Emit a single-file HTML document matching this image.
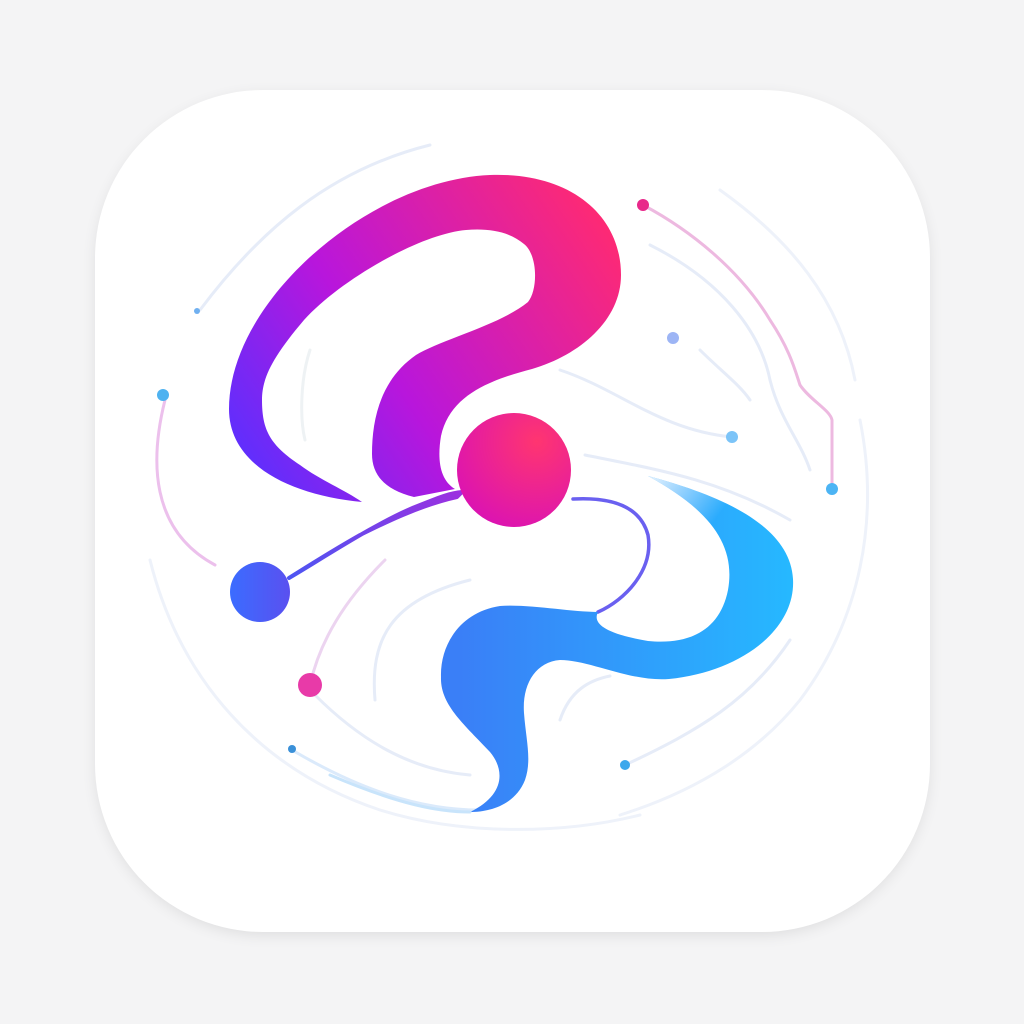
<!DOCTYPE html>
<html><head><meta charset="utf-8"><style>
html,body{margin:0;padding:0;background:#f4f4f5;}
svg{display:block}
</style></head><body>
<svg width="1024" height="1024" viewBox="0 0 1024 1024" xmlns="http://www.w3.org/2000/svg">
<defs>
<filter id="sh" x="-20%" y="-20%" width="140%" height="140%"><feGaussianBlur stdDeviation="8"/></filter>
<linearGradient id="q" x1="240" y1="470" x2="610" y2="220" gradientUnits="userSpaceOnUse">
<stop offset="0" stop-color="#5a30ff"/><stop offset="0.4" stop-color="#b816dc"/><stop offset="1" stop-color="#ff2a72"/></linearGradient>
<linearGradient id="b" x1="460" y1="640" x2="790" y2="640" gradientUnits="userSpaceOnUse">
<stop offset="0" stop-color="#3a7ff7"/><stop offset="1" stop-color="#26b8ff"/></linearGradient>
<linearGradient id="bw" x1="640" y1="470" x2="760" y2="560" gradientUnits="userSpaceOnUse">
<stop offset="0" stop-color="#fff" stop-opacity="1"/><stop offset="0.6" stop-color="#fff" stop-opacity="0"/></linearGradient>
<linearGradient id="bt" x1="520" y1="690" x2="500" y2="812" gradientUnits="userSpaceOnUse">
<stop offset="0" stop-color="#2aa0ff" stop-opacity="0"/><stop offset="1" stop-color="#1ec0ff" stop-opacity="0.6"/></linearGradient>
<radialGradient id="p" cx="0.7" cy="0.25" r="0.9"><stop offset="0" stop-color="#ff3570"/><stop offset="1" stop-color="#d810b8"/></radialGradient>
<linearGradient id="bl" x1="0" y1="0" x2="1" y2="0"><stop offset="0" stop-color="#3b6cff"/><stop offset="1" stop-color="#5a50f0"/></linearGradient>
<linearGradient id="ln" x1="289" y1="574" x2="457" y2="494" gradientUnits="userSpaceOnUse"><stop offset="0" stop-color="#4e55f2"/><stop offset="1" stop-color="#9b30e0"/></linearGradient>
</defs>
<rect x="97" y="96" width="831" height="838" rx="168" fill="#000" opacity="0.10" filter="url(#sh)"/>
<rect x="95" y="90" width="835" height="842" rx="168" fill="#fff"/>
<g fill="none" stroke="#e6ecf8" stroke-width="3" stroke-linecap="round">
<path d="M200,310 C260,230 330,170 430,145"/>
<path d="M165,400 C150,460 150,530 215,565" stroke="#ecc0ec"/>
<path d="M310,350 C300,380 300,420 305,440" stroke="#eef2f4"/>
<path d="M650,245 C720,280 760,330 770,380 C780,420 800,440 810,470" />
<path d="M700,350 C720,370 740,385 750,400"/>
<path d="M560,370 C620,390 660,430 732,437"/>
<path d="M585,455 C660,470 720,480 790,520"/>
<path d="M310,685 C320,640 345,600 385,560" stroke="#ecd4f0"/>
<path d="M315,695 C360,740 410,770 470,775"/>
<path d="M292,750 C360,790 420,810 480,810" stroke="#dbeafb"/>
<path d="M625,765 C700,730 750,700 790,640"/>
<path d="M375,700 C370,640 390,600 470,580"/>
<path d="M560,720 C570,690 590,680 610,676"/>
<path d="M150,560 C180,680 260,770 380,810 C460,835 560,835 640,815" stroke="#eef2fa"/>
<path d="M860,420 C880,520 860,620 800,700 C760,750 700,790 620,815" stroke="#eef2fa"/>
<path d="M720,190 C790,240 840,300 855,380" stroke="#eef2fa"/>
</g>
<path d="M643,205 C690,230 740,270 770,320 C790,350 795,370 800,385 C810,400 830,410 832,420 L832,489" fill="none" stroke="#e8a8d8" stroke-width="3" stroke-linecap="round" opacity="0.8"/>
<path d="M362,502 C290,495 229,465 229,409 C229,300 370,180 490,175 C570,172 621,215 621,275 C621,320 580,355 532,369 C490,380 450,395 441,436 C437,460 440,480 455,489 L414,497 C385,490 372,475 372,454 C372,420 380,380 416,355 C440,340 500,325 528,302 C538,290 538,255 524,244 C510,232 490,228 466,230 C420,234 340,280 304,320 C270,360 262,380 262,400 C262,430 270,445 300,465 C320,480 345,490 362,502 Z" fill="url(#q)"/>
<path d="M289,578 C320,560 380,520 420,505 C440,497 450,493 462,492 L457,497 C420,505 380,525 360,535 C330,552 305,568 289,578 Z" fill="url(#ln)" stroke="url(#ln)" stroke-width="4" stroke-linejoin="round"/>
<circle cx="260" cy="592" r="30" fill="url(#bl)"/>
<circle cx="514" cy="470" r="57" fill="url(#p)"/>
<path d="M573,499 C610,497 640,505 648,535 C654,570 625,600 598,612" fill="none" stroke="#6a60f0" stroke-width="3.5" stroke-linecap="round"/>
<path d="M648,476 C720,495 790,525 793,579 C796,630 740,672 669,679 C630,682 590,660 560,660 C535,662 522,685 524,713 C526,740 532,760 525,780 C515,805 490,812 470,812 C505,795 505,770 490,752 C465,725 440,705 441,677 C440,645 460,612 500,606 C530,604 570,612 598,612 C594,620 596,632 648,641 C690,645 720,630 728,590 C736,545 710,510 648,476 Z" fill="url(#b)"/>
<path d="M648,476 C720,495 790,525 793,579 L728,590 C736,545 710,510 648,476 Z" fill="url(#bw)"/>
<path d="M470,812 C440,812 400,805 330,775" fill="none" stroke="#c8e4fb" stroke-width="3" stroke-linecap="round"/>
<g>
<circle cx="643" cy="205" r="6" fill="#e8288a"/>
<circle cx="673" cy="338" r="6" fill="#9db5f5"/>
<circle cx="732" cy="437" r="6" fill="#7cc4f8"/>
<circle cx="832" cy="489" r="6" fill="#4cb4f4"/>
<circle cx="163" cy="395" r="6" fill="#4eb2f0"/>
<circle cx="197" cy="311" r="3" fill="#70b0f0"/>
<circle cx="310" cy="685" r="12" fill="#e83aa8"/>
<circle cx="292" cy="749" r="4" fill="#3a90d8"/>
<circle cx="625" cy="765" r="5" fill="#3ca8ec"/>
</g>
</svg>
</body></html>
